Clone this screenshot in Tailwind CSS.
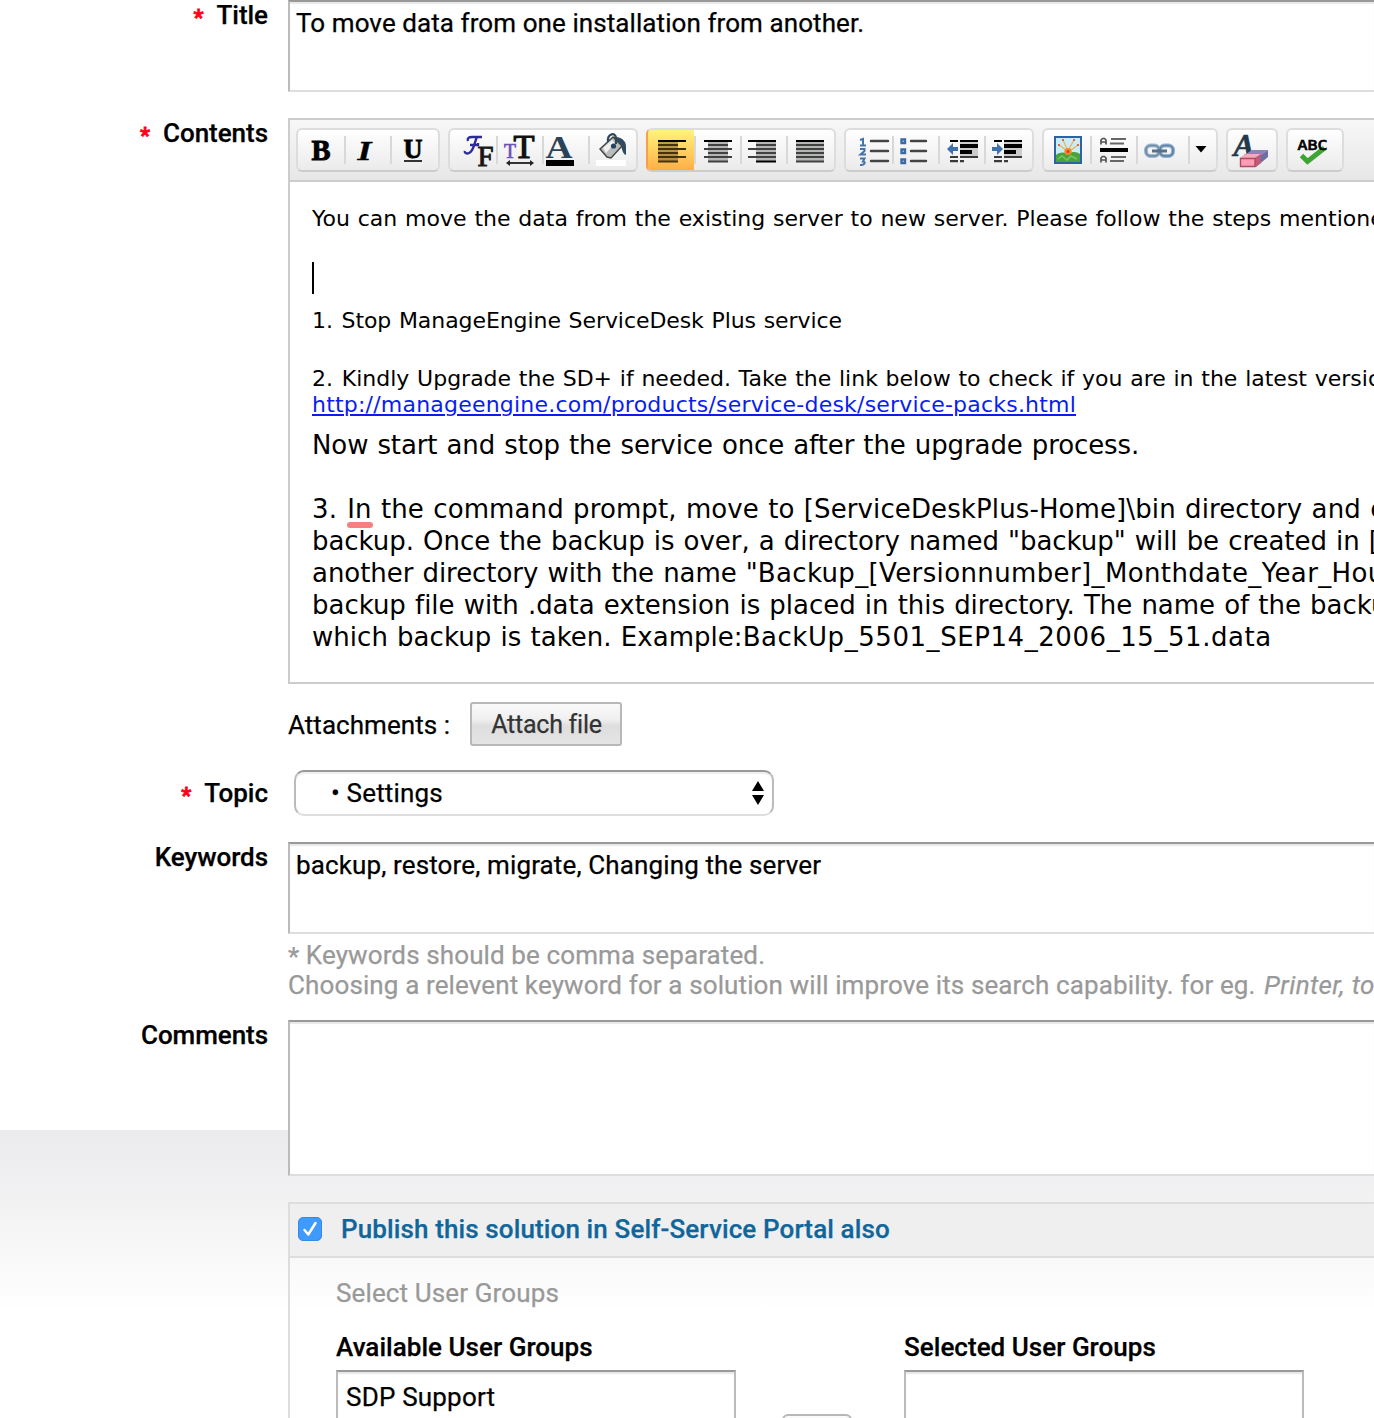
<!DOCTYPE html>
<html lang="en">
<head>
    <meta charset="UTF-8">
    <meta name="viewport" content="width=device-width, initial-scale=1.0">
    <title>Edit Solution</title>
    <script src="https://cdn.jsdelivr.net/npm/@tailwindcss/browser@4"></script>
</head>
<body class="overflow-hidden bg-white">
    <div class="h-[1418px] w-full overflow-hidden bg-[linear-gradient(to_bottom,#ffffff_1130px,#ebeaec_1130px,#f0eff1_1178px,#f4f4f4_1220px,#ffffff_1312px)] font-['Roboto',sans-serif] text-[26px] leading-[30px] text-black [-webkit-text-stroke:0.25px]">

        <!-- Title -->
        <div class="flex gap-5">
            <div class="w-[268px] shrink-0 text-right font-medium tracking-[-0.04px]"><span class="relative top-px mr-[13px] text-[22px] font-bold text-[#ff0018] [-webkit-text-stroke:0.8px]">*</span>Title</div>
            <div class="h-[92px] flex-1 whitespace-nowrap border-2 border-r-0 border-t-[#999] border-b-[#ddd] border-l-[#bbb] bg-white pt-1.5 pl-1.5 tracking-[0.08px] shadow-[inset_0_2px_1px_#e8e8e8]">To move data from one installation from another.</div>
        </div>

        <!-- Contents -->
        <div class="mt-[26px] flex gap-5">
            <div class="w-[268px] shrink-0 text-right font-medium tracking-[-0.04px]"><span class="relative top-px mr-[13px] text-[22px] font-bold text-[#ff0018] [-webkit-text-stroke:0.8px]">*</span>Contents</div>
            <div class="h-[566px] min-w-0 flex-1 border-2 border-r-0 border-[#ccc] bg-white">

                <!-- Toolbar -->
                <div class="flex h-[62px] gap-2 border-b-2 border-[#ccc] bg-linear-to-b from-[#f7f7f7] to-[#e7e7e7] pt-2 pl-1.5 [-webkit-text-stroke:0] [&_svg]:block">
                    <div class="h-11 w-36 shrink-0 overflow-hidden rounded-md border-2 border-[#ddd] border-b-[#ccc] bg-linear-to-b from-white to-[#ebebeb]">
                        <svg width="140" height="40" viewBox="298 130 140 40" font-family="Liberation Serif, serif" font-weight="bold">
                            <path d="M345 136v28M391 136v28" stroke="#d8d8d8" stroke-width="2"/>
                            <text x="311.500" y="160" font-size="30" textLength="19" lengthAdjust="spacingAndGlyphs" stroke="#000" stroke-width="1">B</text>
                            <text x="357.500" y="160" font-size="28" font-style="italic" textLength="14" lengthAdjust="spacingAndGlyphs" stroke="#000" stroke-width=".4">I</text>
                            <text x="403.500" y="157.500" font-size="27" textLength="19" lengthAdjust="spacingAndGlyphs" stroke="#000" stroke-width=".8">U</text>
                            <path d="M404 161h18" stroke="#333" stroke-width="2.200"/>
                        </svg>
                    </div>
                    <div class="h-11 w-[190px] shrink-0 overflow-hidden rounded-md border-2 border-[#ddd] border-b-[#ccc] bg-linear-to-b from-white to-[#ebebeb]">
                        <svg width="186" height="40" viewBox="450 130 186 40" font-family="Liberation Serif, serif">
                            <path d="M497 136v28M543 136v28M589 136v28" stroke="#d8d8d8" stroke-width="2"/>
                            <g fill="none" stroke="#2c2c9c" stroke-width="2.400">
                                <path d="M468 141c-1-3 1-4 4-4h10M477 137c-3 6-3 14-8 16-2 1-5 0-4-2M470 145h8v-2"/>
                            </g>
                            <text x="477.500" y="165.500" font-size="30" textLength="16" lengthAdjust="spacingAndGlyphs" fill="#111" stroke="#222" stroke-width="1.100">F</text>
                            <text x="504" y="158" font-size="21" textLength="12" lengthAdjust="spacingAndGlyphs" fill="#6a50b8" stroke="#6a50b8" stroke-width=".7">T</text>
                            <text x="513.500" y="158" font-size="33" textLength="21" lengthAdjust="spacingAndGlyphs" fill="#111" stroke="#111" stroke-width="1.200">T</text>
                            <path d="M509 163h22" stroke="#333" stroke-width="2"/>
                            <path d="M506 163l4-3v6zM534 163l-4-3v6z" fill="#222"/>
                            <text x="545.500" y="158" font-size="32" font-weight="bold" textLength="27" lengthAdjust="spacingAndGlyphs" fill="#2b4358">A</text>
                            <path d="M546 160h28v6h-28z"/>
                            <!-- paint bucket -->
                            <path d="M596 160h30v6h-30z" fill="#fff"/>
                            <path d="M613 137c6-1 13 3 13 9v9c-3-1-4-5-5-10z" fill="#2f4a62"/>
                            <path d="M600 149l13-12 9 9-11 12-4-1z" fill="#b9bcbd" stroke="#454545" stroke-width="1.400"/>
                            <path d="M603 148l9-8 3 3-9 10z" fill="#f0f0f0"/>
                            <path d="M608 142c-1-9 8-10 8-4v6" fill="none" stroke="#30485c" stroke-width="2.200"/>
                            <circle cx="613.500" cy="146" r="2.600" fill="#26435b"/>
                        </svg>
                    </div>
                    <div class="flex h-11 w-[190px] shrink-0 overflow-hidden rounded-md border-2 border-[#ddd] border-b-[#ccc] border-l-[#ff9c44] bg-linear-to-b from-white to-[#ebebeb]">
                        <div class="h-10 w-[46px] shrink-0 bg-linear-to-b from-[#fff47c] to-[#ffae46]">
                            <svg width="46" height="40" viewBox="648 130 46 40">
                                <path d="M658 140h20v22h-20z" fill="#000" fill-opacity=".28"/>
                                <path d="M658 141h28" stroke="#000" stroke-width="2.200"/>
                                <path d="M658 149h28M658 157h28M658 145h20M658 153h20M658 161.500h20" stroke="#43320c" stroke-width="2.200"/>
                            </svg>
                        </div>
                        <!-- the pressed button colours the frame above and below it -->
                        <div class="relative w-0"><span class="absolute -top-0.5 right-0 h-11 w-12 rounded-l-md border-2 border-r-0 border-t-[#ffb94a] border-b-[#ff9838] border-l-[#ff9c44]"></span></div>
                        <svg class="shrink-0" width="140" height="40" viewBox="694 130 140 40" stroke-width="2.200">
                            <path d="M695 136v28M741 136v28M787 136v28" stroke="#d8d8d8" stroke-width="2"/>
                            <path d="M708 140h20v22h-20zM756 140h20v22h-20zM796 140h28v22h-28z" fill="#b4b6b4"/>
                            <path d="M704 141h28M748 141h28M796 141h28M756 161.500h20" stroke="#000"/>
                            <path d="M704 149h28M704 157h28M708 145h20M708 153h20M708 161.500h20" stroke="#404040"/>
                            <path d="M748 149h28M748 157h28M756 145h20M756 153h20" stroke="#404040"/>
                            <path d="M796 145h28M796 149h28M796 153h28M796 157h28M796 161.500h28" stroke="#404040"/>
                        </svg>
                    </div>
                    <div class="h-11 w-[190px] shrink-0 overflow-hidden rounded-md border-2 border-[#ddd] border-b-[#ccc] bg-linear-to-b from-white to-[#ebebeb]">
                        <svg width="186" height="40" viewBox="846 130 186 40">
                            <path d="M893 136v28M939 136v28M985 136v28" stroke="#d8d8d8" stroke-width="2"/>
                            <g fill="none" stroke="#4673a8" stroke-width="2">
                                <path d="M860 140l3-1v6M860 145.500h6M860 149h4.500v2l-4 3.500h5.500M860 158.500h4.500l-1.500 3c3 0 2 4-3 3.500"/>
                                <path d="M901.500 139.500h3.500v3.500h-3.500zM901.500 149.500h3.500v3.500h-3.500zM901.500 159.500h3.500v3.500h-3.500z" stroke="#3c6aa3" stroke-width="2.400"/>
                            </g>
                            <path d="M871 141h17M871 151h17M871 161h17M911 141h15M911 151h15M911 161h15" stroke="#444" stroke-width="2.400" stroke-linecap="round"/>
                            <!-- outdent / indent -->
                            <g id="lines">
                                <path d="M960 140h18v18h-18z" fill="#bbb" fill-opacity=".7"/>
                                <path d="M950 141h8M960 141h18" stroke="#000" stroke-width="2.200"/>
                                <path d="M960 146h18M960 152h12" stroke="#000" stroke-width="4"/>
                                <path d="M950 157h8M960 157h18M950 161.200h8M960 161.200h4" stroke="#3a3a3a" stroke-width="2.200"/>
                            </g>
                            <use href="#lines" x="44"/>
                            <path d="M947 149l6-6v4h5v4h-5v4zM1003 149l-6-6v4h-5v4h5v4z" fill="#4171ad"/>
                        </svg>
                    </div>
                    <div class="h-11 w-44 shrink-0 overflow-hidden rounded-md border-2 border-[#ddd] border-b-[#ccc] bg-linear-to-b from-white to-[#ebebeb]">
                        <svg width="172" height="40" viewBox="1044 130 172 40">
                            <path d="M1091 136v28M1137 136v28M1189 136v28" stroke="#d8d8d8" stroke-width="2"/>
                            <!-- picture -->
                            <path d="M1055 137h26v26h-26z" fill="#c9ecf8" stroke="#2e62a0" stroke-width="2"/>
                            <path d="M1056 155c4-3 8-3 12-1 5-3 9-2 12 0v8h-24z" fill="#4aa33c"/>
                            <path d="M1058 159l4-3 5 4 4-4 6 3" stroke="#78c860" stroke-width="1.500" fill="none"/>
                            <path d="M1059 145l7 5M1063 140l4 9M1074 140l-5 9M1078 145l-7 5" stroke="#f0b050" stroke-width="1.200"/>
                            <path d="M1058 144h2v2h-2zM1062 139h2v2h-2zM1073 139h2v2h-2zM1077 144h2v2h-2z" fill="#e06a3c"/>
                            <circle cx="1068" cy="151.500" r="3.600" fill="#f28a24"/>
                            <circle cx="1068" cy="151.500" r="1.600" fill="#d8432c"/>
                            <!-- horizontal rule -->
                            <path d="M1101 144.500v-4.500l1.500-1.500h2l1.500 1.500v4.500M1101 142h5M1101 162.500v-4.500l1.500-1.500h2l1.500 1.500v4.500M1101 160h5" fill="none" stroke="#555" stroke-width="1.700"/>
                            <path d="M1111 139h15M1110 143.500h14M1111 157h15M1110 161h14" stroke="#666" stroke-width="2"/>
                            <path d="M1100 150h28" stroke="#000" stroke-width="4"/>
                            <!-- link -->
                            <g fill="none">
                                <rect x="1146" y="145.500" width="13" height="10.500" rx="4.500" stroke="#9bb9d3" stroke-width="4"/>
                                <rect x="1160" y="145.500" width="13" height="10.500" rx="4.500" stroke="#8fb1d2" stroke-width="4"/>
                                <rect x="1146" y="145.500" width="13" height="10.500" rx="4.500" stroke="#71869a" stroke-width="1.600"/>
                                <rect x="1160" y="145.500" width="13" height="10.500" rx="4.500" stroke="#5e7e9c" stroke-width="1.600"/>
                                <path d="M1152 151h15" stroke="#55718c" stroke-width="3"/>
                            </g>
                            <path d="M1195.500 146h11l-5.500 6.500z"/>
                        </svg>
                    </div>
                    <div class="h-11 w-[52px] shrink-0 overflow-hidden rounded-md border-2 border-[#ddd] border-b-[#ccc] bg-linear-to-b from-white to-[#ebebeb]">
                        <svg width="48" height="40" viewBox="1228 130 48 40">
                            <text x="1233.500" y="155.500" font-family="Liberation Serif, serif" font-weight="bold" font-style="italic" font-size="31" textLength="21" lengthAdjust="spacingAndGlyphs" fill="#22384c" stroke="#22384c" stroke-width=".6">A</text>
                            <path d="M1240 158l12-8h16l-12 8z" fill="#8a86ba"/>
                            <path d="M1256 158l12-8v7l-12 10z" fill="#6f6ea6"/>
                            <path d="M1240 158l6-4h15l-6 4z" fill="#f8a8b8"/>
                            <path d="M1255 158l6-4v9l-6 4z" fill="#c05a78"/>
                            <path d="M1240.500 158.500h14.500v8h-14.500z" fill="#ff9db4" stroke="#b04a60" stroke-width="1.400"/>
                        </svg>
                    </div>
                    <div class="h-11 w-[58px] shrink-0 overflow-hidden rounded-md border-2 border-[#ddd] border-b-[#ccc] bg-linear-to-b from-white to-[#ebebeb]">
                        <svg width="54" height="40" viewBox="1288 130 54 40">
                            <path d="M1301.500 155.500l6 6 17-13.500" fill="none" stroke="#3ea535" stroke-width="5"/>
                            <text x="1297.500" y="150" font-family="DejaVu Sans Mono, monospace" font-size="14" textLength="30" lengthAdjust="spacingAndGlyphs" stroke="#000" stroke-width=".7">ABC</text>
                        </svg>
                    </div>
                </div>

                <!-- Editor body -->
                <div class="whitespace-nowrap pt-6 pl-[22px] font-['DejaVu_Sans',sans-serif] text-[22px] leading-[26px] [word-spacing:0.75px] [-webkit-text-stroke:0]">
                    <p class="tracking-[0.02px]">You can move the data from the existing server to new server. Please follow the steps mentioned below</p>
                    <div class="mt-[30px] h-8 w-0.5 bg-black"></div>
                    <p class="mt-3.5 tracking-[-0.07px]"><span class="mr-px">1.</span> Stop ManageEngine ServiceDesk Plus service</p>
                    <p class="mt-8"><span class="mr-px">2.</span> Kindly Upgrade the SD+ if needed. Take the link below to check if you are in the latest version</p>
                    <p class="tracking-[0.21px]"><a href="#" class="text-[#0a1cf0] underline decoration-2 underline-offset-2">http://manageengine.com/products/service-desk/service-packs.html</a></p>
                    <div class="mt-[11px] text-[26px] leading-8 [word-spacing:0.9px]">
                        <p class="tracking-[-0.1px]">Now start and stop the service once after the upgrade process.</p>
                        <p class="mt-8 tracking-[0.11px]"><span class="mr-px">3.</span> <span class="relative">In<span class="absolute bottom-[-4px] left-0 h-1.5 w-[26px] rounded-full bg-[#f58080]"></span></span> the command prompt, move to [ServiceDeskPlus-Home]\bin directory and execute</p>
                        <p class="tracking-[-0.04px]">backup. Once the backup is over, a directory named "backup" will be created in [Service</p>
                        <p class="tracking-[-0.05px]">another directory with the name "<span class="tracking-[0.37px]">Backup_[Versionnumber]_Monthdate_Year_Hour_</span></p>
                        <p class="tracking-[-0.02px]">backup file with .data extension is placed in this directory. The name of the backup</p>
                        <p class="tracking-[0.03px]">which backup is taken. Example:<span class="tracking-[0.56px]">BackUp_5501_SEP14_2006_15_51.data</span></p>
                    </div>
                </div>
            </div>
        </div>

        <!-- Attachments -->
        <div class="mt-[18px] ml-[288px] flex h-11 items-center">
            <span class="w-[182px] pt-0.5 tracking-[0.04px]">Attachments :</span>
            <button class="h-11 w-[152px] rounded-[3px] border-2 border-[#b8b8b8] bg-[linear-gradient(to_bottom,#fafafa,#f0f0f0_38%,#dedede_55%,#e4e4e4)] pt-0.5 pl-px text-[25px] tracking-[-0.25px] text-[#333]">Attach file</button>
        </div>

        <!-- Topic -->
        <div class="mt-6 flex gap-[26px]">
            <div class="w-[268px] shrink-0 pt-2 text-right font-medium"><span class="relative top-px mr-[13px] text-[22px] font-bold text-[#ff0018] [-webkit-text-stroke:0.8px]">*</span>Topic</div>
            <div class="flex h-[46px] w-[480px] items-center rounded-[10px] border-2 border-[#bbb] border-t-[#999] border-b-[#ddd] bg-white pr-2 pl-[35px] shadow-[inset_0_2px_1px_#eee]">
                <span class="tracking-[0.17px]">• Settings</span>
                <svg class="ml-auto" width="12" height="24" viewBox="0 0 12 24"><path d="M0 10L6 0l6 10zM0 14l6 10 6-10z"/></svg>
            </div>
        </div>

        <!-- Keywords -->
        <div class="mt-[26px] flex gap-5">
            <div class="w-[268px] shrink-0 text-right font-medium tracking-[-0.04px]">Keywords</div>
            <div class="min-w-0 flex-1 whitespace-nowrap">
                <div class="h-[92px] border-2 border-r-0 border-t-[#999] border-b-[#ddd] border-l-[#bbb] bg-white pt-1.5 pl-1.5 tracking-[0.13px] shadow-[inset_0_2px_1px_#e8e8e8]">backup, restore, migrate, Changing the server</div>
                <p class="mt-1.5 tracking-[0.11px] text-[#999]"><span class="relative top-0.5">*</span> Keywords should be comma separated.</p>
                <p class="tracking-[0.12px] text-[#999]">Choosing a relevent keyword for a solution will improve its search capability. for eg. <i class="ml-0.5 tracking-[0.35px]">Printer, toner</i></p>
            </div>
        </div>

        <!-- Comments -->
        <div class="mt-5 flex gap-5">
            <div class="w-[268px] shrink-0 text-right font-medium tracking-[-0.06px]">Comments</div>
            <div class="h-[156px] flex-1 border-2 border-r-0 border-t-[#999] border-b-[#ddd] border-l-[#bbb] bg-white shadow-[inset_0_2px_1px_#e8e8e8]"></div>
        </div>

        <!-- Publish -->
        <div class="mt-[26px] ml-[288px] h-[240px] border-2 border-r-0 border-[#ddd]">
            <div class="flex h-[54px] items-center gap-5 border-b-2 border-[#ddd] bg-[#efefef] pb-0.5 pl-2">
                <div class="flex size-6 items-center justify-center rounded-[5px] border border-[#3489ea] bg-[#3f9bfb]">
                    <svg width="16" height="18" viewBox="0 0 16 18"><path d="M2.500 10l3.800 4.500L13.500 3" fill="none" stroke="#fff" stroke-width="2.500" stroke-linecap="round" stroke-linejoin="round"/></svg>
                </div>
                <span class="-ml-px font-medium tracking-[0.12px] text-[#10669a]">Publish this solution in Self-Service Portal also</span>
            </div>
            <div class="pl-[46px]">
                <p class="pt-5 tracking-[0.13px] text-[#999]">Select User Groups</p>
                <div class="mt-6 flex">
                    <div class="w-[400px]">
                        <p class="font-medium tracking-[0.03px]">Available User Groups</p>
                        <div class="mt-2 h-[120px] border-2 border-[#bbb] border-t-[#999] bg-white pt-2.5 pl-2 tracking-[0.2px] shadow-[inset_0_2px_1px_#e8e8e8]">SDP Support</div>
                    </div>
                    <div class="mt-[82px] ml-[46px] h-11 w-[70px] rounded-md border-2 border-[#b8b8b8] bg-[#fafafa]"></div>
                    <div class="ml-[52px] w-[400px]">
                        <p class="font-medium tracking-[0.03px]">Selected User Groups</p>
                        <div class="mt-2 h-[120px] border-2 border-[#bbb] border-t-[#999] bg-white shadow-[inset_0_2px_1px_#e8e8e8]"></div>
                    </div>
                </div>
            </div>
        </div>
    </div>
</body>
</html>
